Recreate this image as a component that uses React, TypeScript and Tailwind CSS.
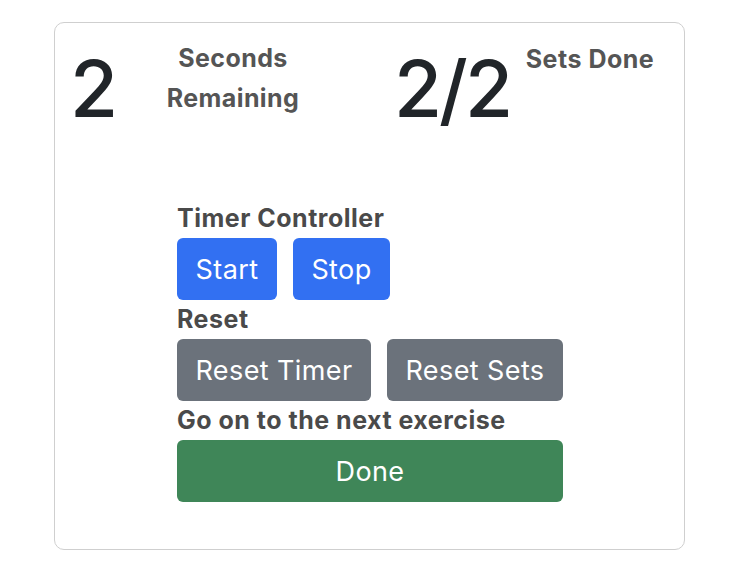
export default function App() {
  const font = { fontFamily: "Inter, 'Noto Sans', sans-serif" }

  return (
    <div className="w-[730px] h-[576px] bg-white pt-[22px] pl-[54px]" style={font}>
      <div className="w-[631px] h-[528px] border border-[#cfcfcf] rounded-[10px]">
        {/* counters */}
        <div className="flex h-[176px] pl-[15px]">
          <div className="w-[88px] mt-[26px] text-[78px] leading-[80px] font-medium tracking-[-1px] text-[#212529]">2</div>
          <div className="w-[150px] mt-[15px] text-center text-[25px] leading-[40px] font-bold tracking-[0.4px] text-[#555]">
            Seconds
            <br />
            Remaining
          </div>
          <div className="w-[120px] ml-[86px] mt-[26px] text-[78px] leading-[80px] font-medium tracking-[-3px] text-[#212529]">2/2</div>
          <div className="w-[150px] ml-[1px] mt-[16px] text-center text-[25px] leading-[40px] font-bold tracking-[0.5px] text-[#555]">
            Sets Done
          </div>
        </div>

        {/* controls */}
        <div className="ml-[122px] w-[386px]">
          <Label>Timer Controller</Label>
          <div className="flex gap-[16px]">
            <Btn className="w-[100px] bg-[#3270f2]">Start</Btn>
            <Btn className="w-[97px] bg-[#3270f2]">Stop</Btn>
          </div>
          <Label>Reset</Label>
          <div className="flex gap-[16px]">
            <Btn className="w-[194px] bg-[#6b727b]">Reset Timer</Btn>
            <Btn className="w-[176px] bg-[#6b727b]">Reset Sets</Btn>
          </div>
          <Label>Go on to the next exercise</Label>
          <Btn className="w-full bg-[#3f8658]">Done</Btn>
        </div>
      </div>
    </div>
  )
}

function Label({ children }: { children: React.ReactNode }) {
  return (
    <div className="h-[39px] leading-[39px] text-[25px] font-bold tracking-[0.5px] text-[#4a4a4a] whitespace-nowrap">
      {children}
    </div>
  )
}

function Btn({ children, className }: { children: React.ReactNode; className: string }) {
  return (
    <button
      className={`h-[62px] pt-[3px] rounded-[6px] text-white text-[27px] tracking-[0.4px] flex items-center justify-center whitespace-nowrap ${className}`}
    >
      {children}
    </button>
  )
}
